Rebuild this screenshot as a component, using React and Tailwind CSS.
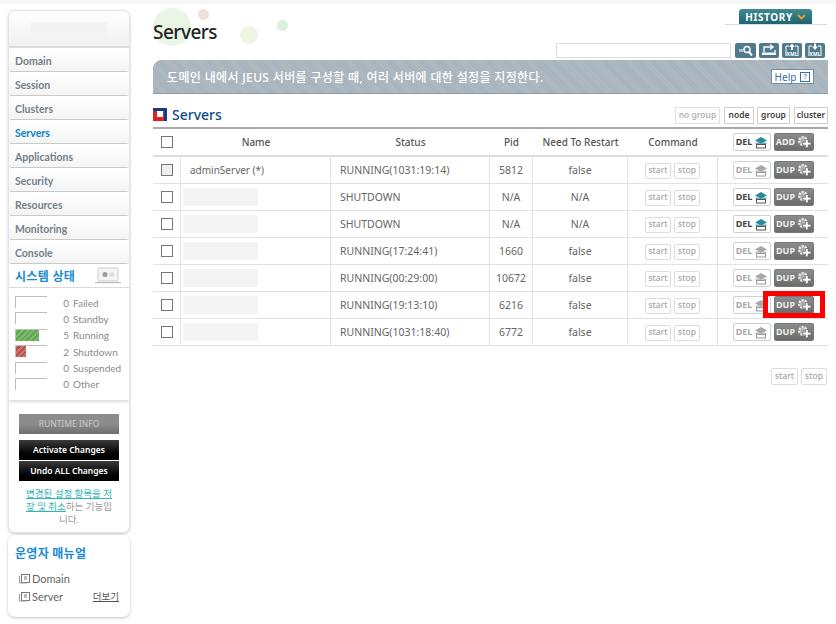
const F = "font-['Noto_Sans','Noto_Sans_CJK_KR',sans-serif]";
const L = "font-['Lato','Noto_Sans_CJK_KR',sans-serif]";

const navItems = ["Domain","Session","Clusters","Servers","Applications","Security","Resources","Monitoring","Console"];
const statusItems = [
  ["0","Failed",0,""],["0","Standby",0,""],["5","Running",23,"bg-[repeating-linear-gradient(135deg,#7dbb6a_0px,#7dbb6a_2px,#5fa552_2px,#5fa552_4px)]"],
  ["2","Shutdown",10,"bg-[repeating-linear-gradient(135deg,#cf6f6f_0px,#cf6f6f_2px,#b55252_2px,#b55252_4px)]"],
  ["0","Suspended",0,""],["0","Other",0,""],
];
const rows = [
  ["adminServer (*)","RUNNING(1031:19:14)","5812","false",false,true],
  ["","SHUTDOWN","N/A","N/A",true,false],
  ["","SHUTDOWN","N/A","N/A",true,false],
  ["","RUNNING(17:24:41)","1660","false",false,false],
  ["","RUNNING(00:29:00)","10672","false",false,false],
  ["","RUNNING(19:13:10)","6216","false",false,false],
  ["","RUNNING(1031:18:40)","6772","false",false,false],
];

function Cap({active}) {
  const a = active ? "#2b8a9c" : "#a8a8a8";
  const b = active ? "#555" : "#999";
  return (
    <svg width="14" height="13" viewBox="0 0 14 13" className="shrink-0">
      <path d="M7 1 L13 4.5 L7 7.5 L1 4.5 Z" fill={a} />
      <rect x="1.5" y="6.5" width="11" height="1.5" fill={a} opacity="0.7" />
      <rect x="2.5" y="8.5" width="9" height="3.5" fill="#fff" stroke={b} strokeWidth="1" />
    </svg>
  );
}
function Gear() {
  return (
    <svg width="15" height="14" viewBox="0 0 15 14" className="shrink-0">
      <circle cx="6" cy="6" r="3.8" fill="#aaa" stroke="#e8e8e8" strokeWidth="2.4" strokeDasharray="2.2 1" />
      <path d="M8.5 4.5 h2.6 v2.8 h2.9 v2.6 h-2.9 v2.9 h-2.6 v-2.9 h-2.9 v-2.6 h2.9 z" fill="#fff" stroke="#555" strokeWidth="0.6" />
    </svg>
  );
}
function DelBtn({active}) {
  return (
    <div className={`w-[38px] h-[18px] bg-white border border-[#d0d0d0] rounded-[2px] flex items-center justify-center gap-[2px] text-[9px] font-bold ${active ? "text-[#444]" : "text-[#aaa]"}`}>
      <span>DEL</span><Cap active={active} />
    </div>
  );
}
function GrayBtn({label}) {
  return (
    <div className="w-[40px] h-[18px] bg-gradient-to-b from-[#8c8c8c] to-[#6c6c6c] border border-[#777] rounded-[2px] flex items-center justify-center gap-[2px] text-[9px] font-bold text-[#eee]">
      <span>{label}</span><Gear />
    </div>
  );
}
function Small({children, cls=""}) {
  return <div className={`h-[16px] px-[3px] bg-white border border-[#dcdcdc] rounded-[2px] flex items-center justify-center text-[8.5px] font-medium text-[#a5a5a5] ${cls}`}>{children}</div>;
}
function Check({fill}) {
  return <div className={`w-[12px] h-[12px] border border-[#777] ${fill ? "bg-[#eee]" : "bg-white"}`} />;
}
function IconBtn({children, w="w-[20px]"}) {
  return <div className={`${w} h-[15px] rounded-[2px] bg-[#4d7a8e] flex items-center justify-center`}>{children}</div>;
}
function Xml({up}) {
  return (
    <svg width="18" height="14" viewBox="0 0 18 14">
      <path d="M3 13 V3 H6 M12 3 H15 V13" fill="none" stroke="#fff" strokeWidth="1" />
      <path d={up ? "M9 0.5 L12 4 H10 V7 H8 V4 H6 Z" : "M8 0.5 H10 V3.5 H12 L9 7 L6 3.5 H8 Z"} fill="#fff" />
      <text x="9" y="12.5" textAnchor="middle" fontSize="5" fontWeight="700" fill="#fff">XML</text>
    </svg>
  );
}
function Doc() {
  return (
    <svg width="11" height="10" viewBox="0 0 11 10" className="shrink-0">
      <rect x="2.5" y="0.5" width="8" height="8" fill="none" stroke="#777" />
      <path d="M0.5 2v7h7" fill="none" stroke="#999" />
      <path d="M5 3h3M5 5h3" stroke="#777" />
    </svg>
  );
}

function Sidebar() {
  return (
    <aside className="w-[122px] shrink-0 flex flex-col ml-[8px] mt-[10px] gap-[2px]">
      <div className="bg-white rounded-[7px] border border-[#e3e3e3] shadow-[0_1px_3px_rgba(0,0,0,0.2)] overflow-hidden">
        <div className="h-[37px] bg-gradient-to-b from-white to-[#f0f0f0] border-b-2 border-[#dcdcdc] flex items-center justify-center">
          <div className="w-[76px] h-[13px] bg-[#f3f3f3]" />
        </div>
        {navItems.map((n) => (
          <div key={n} className={`h-[24px] pl-[6px] pt-[4px] flex items-center text-[10.5px] font-bold bg-gradient-to-b from-white to-[#f4f4f4] border-b border-[#c9c9c9] rounded-b-[3px] ${L} ${n === "Servers" ? "text-[#0d7fc9]" : "text-[#74808a]"}`}>{n}</div>
        ))}
        <div className="h-[24px] pl-[6px] pr-[8px] flex items-center justify-between border-b border-[#dcdcdc]">
          <span className="pt-[2px] text-[12px] font-bold text-[#1a8ad2] tracking-[0.3px]">시스템 상태</span>
          <svg width="26" height="17" viewBox="0 0 26 17">
            <rect x="3" y="1" width="20" height="13" rx="1" fill="#f4f4f4" stroke="#ccc" />
            <circle cx="10" cy="7.5" r="2.5" fill="#999" />
            <rect x="14" y="5.5" width="5" height="4" fill="#ddd" />
            <rect x="0" y="15" width="26" height="1.2" fill="#bbb" />
          </svg>
        </div>
        <div className={`relative pt-[8px] pl-[6px] pb-[10px] flex flex-col gap-[4.4px] shadow-[0_2px_3px_rgba(0,0,0,0.15)] ${L}`}>
          {statusItems.map(([c,l,w,bg]) => (
            <div key={l} className="h-[12px] flex items-center">
              <div className="w-[32px] h-[12px] border-t border-l border-[#bdbdbd] relative">
                {w > 0 && <div className={`h-full ${bg}`} style={{width: w}} />}
              </div>
              <span className="w-[22px] pt-[2px] text-right text-[10px] text-[#888]">{c}</span>
              <span className="ml-[4px] pt-[2px] text-[10px] text-[#8a8a8a]">{l}</span>
            </div>
          ))}
        </div>
        <div className="bg-white px-[10px] pt-[14px] pb-[6px] flex flex-col">
          <div className="h-[20px] bg-gradient-to-b from-[#8c8c8c] via-[#8c8c8c] to-[#6f6f6f] flex items-center justify-center text-[8.5px] text-[#c9c9c9]">RUNTIME INFO</div>
          <div className="mt-[6px] h-[20px] bg-gradient-to-b from-[#3c3c3c] to-black flex items-center justify-center text-[8.5px] font-semibold text-white">Activate Changes</div>
          <div className="mt-[1px] h-[20px] bg-gradient-to-b from-[#3c3c3c] to-black flex items-center justify-center text-[8.5px] font-semibold text-white">Undo ALL Changes</div>
          <p className="mt-[6px] text-center text-[9.5px] leading-[13px] text-[#999] px-[5px]">
            <span className="text-[#2fb5b5] underline">변경된 설정 항목을 저장 및 취소</span>하는 기능입니다.
          </p>
        </div>
      </div>
      <div className={`h-[82px] bg-white rounded-[7px] shadow-[0_1px_3px_rgba(0,0,0,0.25)] pl-[7px] pr-[11px] pt-[10px] ${L}`}>
        <div className="text-[12px] font-bold text-[#1a8ad2] tracking-[0.3px] leading-[18px]">운영자 매뉴얼</div>
        <div className="mt-[7px] pl-[4px] h-[18px] flex items-center gap-[2px] text-[11px] text-[#666]">
          <Doc />Domain
        </div>
        <div className="h-[19px] pl-[4px] flex items-center gap-[2px] text-[11px] text-[#666]">
          <Doc />Server
          <span className="ml-auto text-[9.5px] underline text-[#555]">더보기</span>
        </div>
      </div>
    </aside>
  );
}

const col = "flex items-center justify-center border-r border-[#e2e2e2] h-full";
function Row({r}) {
  return (
    <div className="h-[27px] flex border-b border-[#e2e2e2] text-[10.5px] text-[#666]">
      <div className={`${col} w-[28px]`}><Check fill={r[5]} /></div>
      <div className={`${col} w-[150px] !justify-start`}>
        {r[0] ? <span className="ml-[9px] pt-[1px] text-[10px]">{r[0]}</span> : <div className="ml-[2px] w-[75px] h-[18px] bg-[#f4f4f4]" />}
      </div>
      <div className={`${col} w-[159px] !justify-start pl-[9px] pt-[1px]`}>{r[1]}</div>
      <div className={`${col} w-[43px] pt-[1px]`}>{r[2]}</div>
      <div className={`${col} w-[95px] pt-[1px]`}>{r[3]}</div>
      <div className={`${col} w-[90px] gap-[3px] pt-[1px]`}><Small cls="w-[26px]">start</Small><Small cls="w-[26px]">stop</Small></div>
      <div className="flex items-center h-full pl-[15px] gap-[3px]"><DelBtn active={r[4]} /><GrayBtn label="DUP" /></div>
    </div>
  );
}

function Main() {
  return (
    <main className="ml-[23px] w-[675px] shrink-0 relative">
      <div className="h-[50px] relative">
        <div className="absolute left-[0px] top-[8px] w-[38px] h-[38px] rounded-full bg-[#eaf5e6]" />
        <div className="absolute left-[45px] top-[9px] w-[11px] h-[11px] rounded-full bg-[#efe2dc]" />
        <div className="absolute left-[87px] top-[26px] w-[18px] h-[18px] rounded-full bg-[#eef5e0]" />
        <div className="absolute left-[124px] top-[20px] w-[11px] h-[11px] rounded-full bg-[#dcefdc]" />
        <h1 className="absolute left-0 top-[17px] text-[19px] tracking-[-0.5px] leading-[30px] font-medium text-[#222]">Servers</h1>
        <div className="absolute right-[16px] top-[9px] w-[73px] h-[15px] rounded-t-[3px] bg-gradient-to-b from-[#3f8a93] to-[#1f6470] flex items-center justify-center gap-[4px] text-[10px] font-bold tracking-[0.6px] text-white leading-none">
          HISTORY
          <svg width="9" height="6" viewBox="0 0 9 6"><path d="M1 1 L4.5 4.5 L8 1" fill="none" stroke="#f0a020" strokeWidth="1.8" /></svg>
        </div>
        <div className="absolute right-[1px] top-[24px] w-[102px] h-px bg-[#cfe0e3]" />
      </div>
      <div className="flex items-center justify-end gap-[3px] h-[16px] mt-[-8px] pr-[3px]">
        <div className="w-[175px] h-[15px] bg-white border border-[#dcdcdc] mr-[1px]" />
        <IconBtn w="w-[21px]">
          <svg width="16" height="13" viewBox="0 0 16 13"><rect x="1" y="5" width="4" height="3" fill="#a5c6d2" /><circle cx="9" cy="5.5" r="3" fill="#4d7a8e" stroke="#fff" strokeWidth="1.6" /><path d="M11 8 L14 11.5" stroke="#fff" strokeWidth="2" /></svg>
        </IconBtn>
        <IconBtn>
          <svg width="18" height="14" viewBox="0 0 18 14"><path d="M4 9 V4 H12 M10 1.5 L13 4 L10 6.5 M15 7 V9" fill="none" stroke="#fff" strokeWidth="1.4" /><rect x="2" y="9.5" width="14" height="2.5" fill="#fff" /></svg>
        </IconBtn>
        <IconBtn><Xml up /></IconBtn>
        <IconBtn><Xml /></IconBtn>
      </div>
      <div className="mt-[2px] h-[34px] rounded-tl-[9px] border-b border-[#8e9ba5] bg-[#aab6bf] bg-[repeating-linear-gradient(45deg,#a6b2bb_0px,#a6b2bb_1px,#b0bbc4_1px,#b0bbc4_2px)] flex items-center justify-between pl-[14px] pr-[14px]">
        <span className="pt-[2px] text-[12px] font-medium text-white tracking-[0.35px]">도메인 내에서 JEUS 서버를 구성할 때, 여러 서버에 대한 설정을 지정한다.</span>
        <div className="w-[43px] h-[15px] bg-white border border-[#6f90a8] flex items-center justify-center gap-[4px] text-[10px] text-[#3a6f9a] leading-none">
          Help <span className="w-[10px] h-[10px] border border-[#3a6f9a] flex items-center justify-center text-[7px]">?</span>
        </div>
      </div>
      <div className="h-[33px] pt-[10px] pb-[3px] flex items-center justify-between">
        <div className="flex items-center gap-[5px]">
          <div className="w-[14px] h-[13px] bg-[#e31f26] relative">
            <div className="absolute left-0 top-0 w-full h-[3px] bg-[#0f3f8c]" />
            <div className="absolute right-0 top-0 w-[3px] h-full bg-[#0f3f8c]" />
            <div className="absolute left-[4px] top-[3px] w-[6px] h-[6px] bg-white" />
          </div>
          <span className="text-[14px] font-medium text-[#0f4a8a]">Servers</span>
        </div>
        <div className="mt-[3px] flex gap-[3px] text-[8.5px] font-semibold">
          <div className="w-[45px] h-[17px] bg-white border border-[#e2e2e2] flex items-center justify-center text-[#b5b5b5]">no group</div>
          <div className="w-[30px] h-[17px] ml-[1px] bg-white border border-[#cfcfcf] flex items-center justify-center text-[#444]">node</div>
          <div className="w-[33px] h-[17px] bg-white border border-[#cfcfcf] flex items-center justify-center text-[#444]">group</div>
          <div className="w-[34px] h-[17px] ml-[1px] bg-white border border-[#cfcfcf] flex items-center justify-center text-[#444]">cluster</div>
        </div>
      </div>
      <div className="border-t-2 border-[#aaa]">
        <div className="h-[28px] flex items-center border-b-2 border-[#ddd] text-[10px] font-medium text-[#555]">
          <div className="w-[28px] flex justify-center"><Check /></div>
          <div className="w-[150px] text-center">Name</div>
          <div className="w-[159px] text-center">Status</div>
          <div className="w-[43px] text-center">Pid</div>
          <div className="w-[95px] text-center">Need To Restart</div>
          <div className="w-[90px] text-center">Command</div>
          <div className="flex items-center pl-[15px] gap-[3px]"><DelBtn active /><GrayBtn label="ADD" /></div>
        </div>
        {rows.map((r, i) => <Row key={i} r={r} />)}
      </div>
      <div className="mt-[22px] flex justify-end gap-[3px] pr-[1px]">
        <Small cls="w-[27px] h-[17px]">start</Small><Small cls="w-[26px] h-[17px]">stop</Small>
      </div>
      <div className="absolute left-[610px] top-[291px] w-[62px] h-[27px] border-[5px] border-[#f00]" />
    </main>
  );
}

export default function App() {
  return (
    <div className={`relative w-[836px] h-[624px] overflow-hidden bg-white flex ${F}`}>
      <div className="absolute left-0 right-0 top-0 h-[4px] bg-[#f7f7f7]" />
      <Sidebar />
      <Main />
    </div>
  );
}
